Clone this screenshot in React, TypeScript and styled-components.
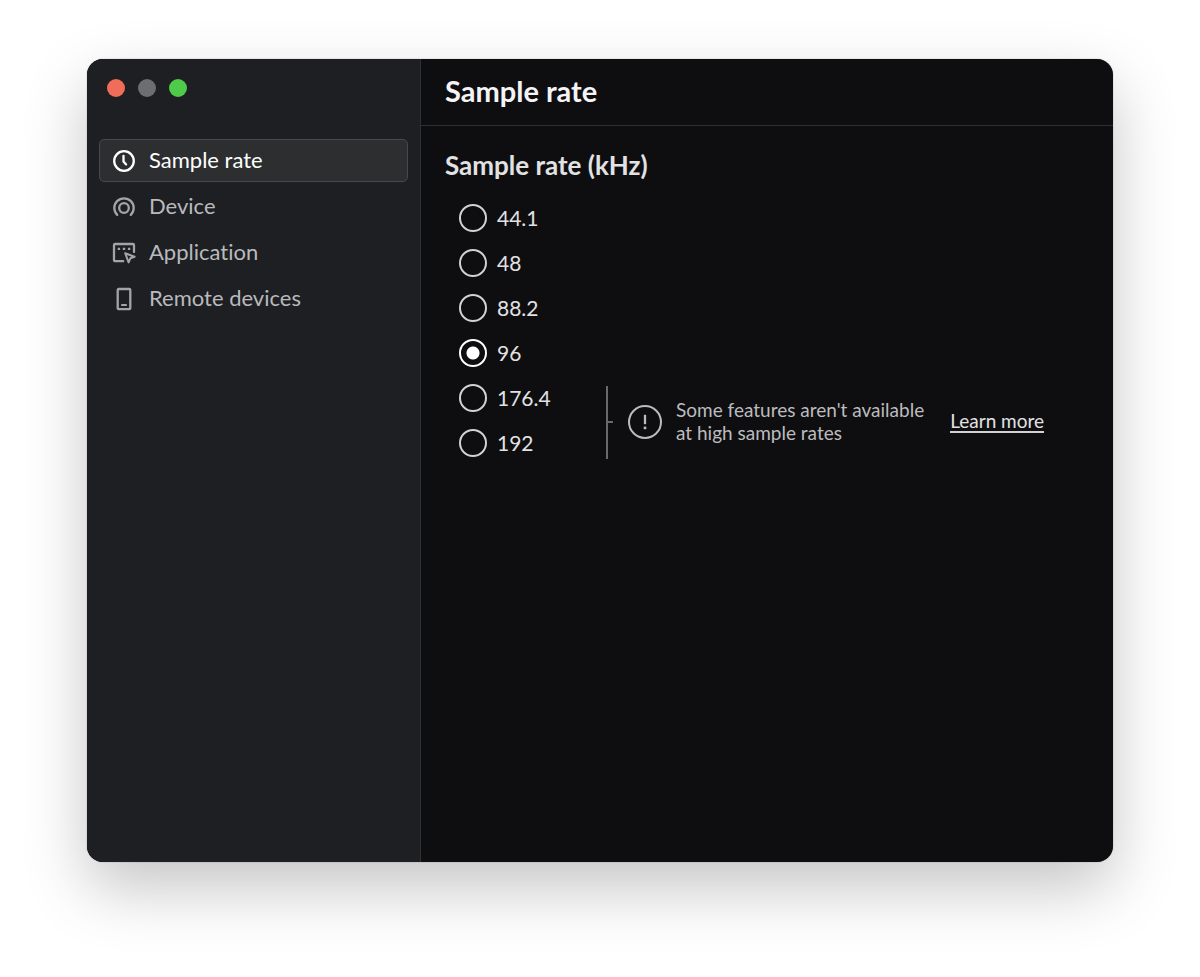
import React, { useState } from "react";
import styled, { createGlobalStyle } from "styled-components";

const GlobalStyle = createGlobalStyle`
  *, *::before, *::after { box-sizing: border-box; }
  body {
    margin: 0;
    background: #ffffff;
    font-family: Lato, "Open Sans", sans-serif;
    font-variant-ligatures: none;
    -webkit-font-smoothing: antialiased;
  }
`;

const Desktop = styled.div`
  display: flex;
  min-height: 100vh;
  padding: 59px 87px 115px;
`;

const Window = styled.div`
  display: flex;
  flex: 1;
  min-width: 0;
  border-radius: 16px;
  overflow: hidden;
  background: #0e0e10;
  box-shadow: 0 0 1px rgba(0, 0, 0, 0.6), 0 26px 64px rgba(0, 0, 0, 0.23);
`;

const Sidebar = styled.aside`
  flex: 0 0 334px;
  padding: 20px 12px;
  background: #1e1f23;
  border-right: 1px solid #2f3034;
`;

const WindowControls = styled.div`
  display: flex;
  gap: 13px;
  padding-left: 8px;
  margin-bottom: 42px;
`;

const WindowButton = styled.button<{ $color: string }>`
  width: 18px;
  height: 18px;
  padding: 0;
  border: 0;
  border-radius: 50%;
  background: ${(p) => p.$color};
`;

const Nav = styled.nav`
  display: flex;
  flex-direction: column;
  gap: 3px;
`;

const NavItem = styled.button<{ $active: boolean }>`
  display: flex;
  align-items: center;
  gap: 13px;
  height: 43px;
  padding: 0 12px;
  border: 1px solid ${(p) => (p.$active ? "#48494c" : "transparent")};
  border-radius: 5px;
  background: ${(p) => (p.$active ? "#2d2e30" : "transparent")};
  color: ${(p) => (p.$active ? "#ffffff" : "#b9babc")};
  font: inherit;
  font-size: 22px;
  font-variant-ligatures: none;
  line-height: 24px;
  text-align: left;

  svg {
    flex: none;
    color: ${(p) => (p.$active ? "#ffffff" : "#a3a4a7")};
  }
`;

const NavLabel = styled.span`
  padding-bottom: 2px;
`;

const Main = styled.main`
  flex: 1;
  min-width: 0;
  color: #e2e2e4;
`;

const Header = styled.header`
  display: flex;
  align-items: center;
  height: 67px;
  padding: 0 24px 3px;
  border-bottom: 1px solid #303033;
`;

const Title = styled.h1`
  margin: 0;
  color: #f4f4f6;
  font-size: 29px;
  line-height: 32px;
  font-weight: 700;
`;

const Options = styled.fieldset`
  display: grid;
  grid-template-columns: 147px 1fr;
  grid-auto-rows: 45px;
  margin: 0;
  padding: 14px 25px 0 38px;
  border: 0;
`;

const Legend = styled.legend`
  margin-left: -14px;
  padding: 23px 0 0;
  font-size: 26px;
  line-height: 32px;
  font-weight: 700;
`;

const Option = styled.label`
  grid-column: 1;
  display: flex;
  align-items: center;
  gap: 10px;
  font-size: 21px;
  line-height: 28px;
`;

const Radio = styled.input`
  appearance: none;
  width: 28px;
  height: 28px;
  margin: 0;
  border: 2px solid #d2d2d4;
  border-radius: 50%;

  &:checked {
    border-color: #ffffff;
    background: radial-gradient(circle, #ffffff 6px, transparent 7px);
  }
`;

const Note = styled.div`
  grid-column: 2;
  grid-row: 5 / 7;
  align-self: center;
  display: flex;
  align-items: center;
  padding-top: 4px;
  color: #bcbcbe;
`;

const Bracket = styled.div`
  display: flex;
  align-items: center;
  height: 73px;
  margin-right: 15px;
  border-left: 2px solid #69696b;

  &::after {
    content: "";
    width: 5px;
    height: 2px;
    background: #69696b;
  }
`;

const NoteText = styled.p`
  margin: 0 26px 2px 14px;
  font-size: 19px;
  line-height: 23px;
`;

const LearnMore = styled.a`
  border-bottom: 2px solid #d2d2d4;
  margin-bottom: 2px;
  color: #e2e2e4;
  font-size: 19px;
  line-height: 21px;
  text-decoration: none;
  white-space: nowrap;
`;

const iconProps = {
  width: 24,
  height: 24,
  viewBox: "0 0 24 24",
  fill: "none",
  stroke: "currentColor",
  strokeWidth: 2.3,
  "aria-hidden": true,
} as const;

const ClockIcon = () => (
  <svg {...iconProps}>
    <circle cx="12" cy="12" r="9.8" />
    <path d="M11.5 6.8v5.6l2.6 3" strokeLinecap="round" strokeLinejoin="round" />
  </svg>
);

const DeviceIcon = () => (
  <svg {...iconProps}>
    <circle cx="12" cy="13" r="4.8" />
    <path d="M5.2 19.9a9.7 9.7 0 1 1 13.6 0" strokeLinecap="round" />
  </svg>
);

const ApplicationIcon = () => (
  <svg {...iconProps}>
    <path
      d="M11.2 20.2H3.2a1.2 1.2 0 0 1-1.2-1.2V4.2A1.2 1.2 0 0 1 3.2 3h17.6A1.2 1.2 0 0 1 22 4.2V11"
      strokeLinecap="round"
    />
    <path d="M5.7 7.9h2.4M10.8 7.9h2.4M15.9 7.9h2.4" />
    <path d="M13.2 12.2l9.4 3.6-4.2 1.5-1.8 4.1z" strokeWidth="2" strokeLinejoin="round" />
  </svg>
);

const RemoteIcon = () => (
  <svg {...iconProps}>
    <rect x="5.7" y="2" width="12.6" height="20.2" rx="1" />
    <path d="M9.2 18h5.6" strokeWidth="2" />
  </svg>
);

const AlertIcon = () => (
  <svg width="34" height="34" viewBox="0 0 34 34" fill="none" stroke="currentColor" strokeWidth="2" aria-hidden>
    <circle cx="17" cy="17" r="16" />
    <path d="M17 9.8v9.4" strokeWidth="2.3" />
    <path d="M17 21.6v2.6" strokeWidth="2.6" />
  </svg>
);

const pages = [
  { label: "Sample rate", Icon: ClockIcon },
  { label: "Device", Icon: DeviceIcon },
  { label: "Application", Icon: ApplicationIcon },
  { label: "Remote devices", Icon: RemoteIcon },
];

const controls = [
  { label: "Close", color: "#f16c59" },
  { label: "Minimize", color: "#6d6e71" },
  { label: "Zoom", color: "#4fcb49" },
];

const rates = ["44.1", "48", "88.2", "96", "176.4", "192"];

export default function App() {
  const [rate, setRate] = useState("96");

  return (
    <Desktop>
      <GlobalStyle />
      <Window>
        <Sidebar>
          <WindowControls>
            {controls.map((c) => (
              <WindowButton key={c.label} type="button" aria-label={c.label} $color={c.color} />
            ))}
          </WindowControls>
          <Nav>
            {pages.map(({ label, Icon }, i) => (
              <NavItem key={label} type="button" $active={i === 0}>
                <Icon />
                <NavLabel>{label}</NavLabel>
              </NavItem>
            ))}
          </Nav>
        </Sidebar>
        <Main>
          <Header>
            <Title>Sample rate</Title>
          </Header>
          <Options>
            <Legend>Sample rate (kHz)</Legend>
            {rates.map((r) => (
              <Option key={r}>
                <Radio
                  type="radio"
                  name="rate"
                  value={r}
                  checked={rate === r}
                  onChange={() => setRate(r)}
                />
                {r}
              </Option>
            ))}
            <Note>
              <Bracket />
              <AlertIcon />
              <NoteText>
                Some features aren't available
                <br />
                at high sample rates
              </NoteText>
              <LearnMore href="#learn-more">Learn more</LearnMore>
            </Note>
          </Options>
        </Main>
      </Window>
    </Desktop>
  );
}
